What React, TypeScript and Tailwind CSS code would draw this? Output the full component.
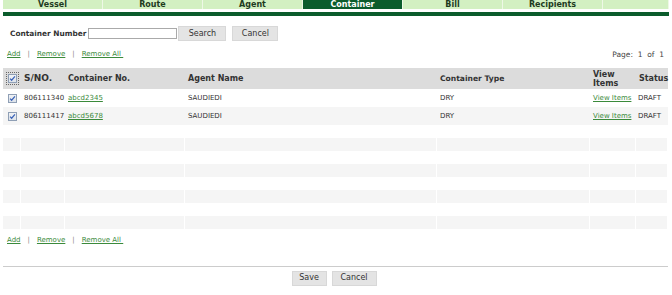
import React from "react";

const tabs = ["Vessel", "Route", "Agent", "Container", "Bill", "Recipients", ""];
const cols = "grid grid-cols-[18px_44px_120px_252px_153px_46px_32px]";

const rows = [
  { sn: "806111340", no: "abcd2345", agent: "SAUDIEDI", type: "DRY", status: "DRAFT" },
  { sn: "806111417", no: "abcd5678", agent: "SAUDIEDI", type: "DRY", status: "DRAFT" },
];

function Check({ focus }: { focus?: boolean }) {
  const box = (
    <span className="flex h-[9px] w-[9px] items-center justify-center border border-[#8f9fb5] bg-gradient-to-b from-[#f0f2f5] to-[#dde3ea]">
      <svg viewBox="0 0 8 8" className="h-[7px] w-[7px]">
        <path d="M1.2 4.2 L3 6 L6.8 1.6" fill="none" stroke="#3a62b8" strokeWidth="1.4" />
      </svg>
    </span>
  );
  if (!focus) return box;
  return <span className="flex h-[13px] w-[13px] items-center justify-center border border-dotted border-[#666]">{box}</span>;
}

function Links() {
  return (
    <div className="flex items-center text-[7px] text-[#3b8a3b]">
      <span className="underline">Add</span>
      <span className="mx-[7px] text-[#888]">|</span>
      <span className="underline">Remove</span>
      <span className="mx-[7px] text-[#888]">|</span>
      <span className="underline">Remove All&nbsp;</span>
    </div>
  );
}

function Btn({ label, w }: { label: string; w: string }) {
  return (
    <div className={`flex h-[15px] ${w} items-center justify-center border border-[#d8d8d8] bg-[#e4e4e4] text-[8px] text-[#333]`}>
      {label}
    </div>
  );
}

export default function App() {
  return (
    <div className="h-[295px] w-[672px] overflow-hidden bg-white px-[3px] font-['DejaVu_Sans',sans-serif] text-[#333]">
      {/* tab strip */}
      <div className="flex h-[9px]">
        {tabs.map((t, i) => (
          <div
            key={i}
            className={`flex items-center justify-center border-r border-[#eef8e6] text-[8px] font-bold leading-none ${
              t === "Container" ? "bg-[#0b5c2c] text-white" : "bg-[#d3f0c2] text-[#1e3b1e]"
            } ${i === 6 ? "flex-1" : "w-[100px]"}`}
          >
            {t}
          </div>
        ))}
      </div>
      <div className="mt-[3px] h-[4px] bg-[#0b5c2c]" />

      {/* search */}
      <div className="mt-[10px] flex items-center pl-[7px]">
        <span className="text-[7.4px] font-bold text-[#333]">Container Number</span>
        <div className="ml-[2px] h-[11px] w-[89px] border border-[#aaa] bg-white" />
        <div className="ml-px">
          <Btn label="Search" w="w-[48px]" />
        </div>
        <div className="ml-[6px]">
          <Btn label="Cancel" w="w-[46px]" />
        </div>
      </div>

      <div className="mt-[8px] flex items-center justify-between pl-[4px] pr-[5px]">
        <Links />
        <span className="text-[7.5px] text-[#444]">Page:&nbsp; 1&nbsp; of&nbsp; 1</span>
      </div>

      {/* table */}
      <div className="mt-[8px] w-[665px]">
        <div className={`${cols} h-[21px] items-center bg-[#dcdcdc] text-[8px] font-bold text-[#333]`}>
          <div className="flex justify-center pl-px">
            <Check focus />
          </div>
          <div className="pl-[3px] text-[9px]">S/NO.</div>
          <div className="pl-[3px]">Container No.</div>
          <div className="pl-[3px]">Agent Name</div>
          <div className="pl-[3px] text-[7.6px]">Container Type</div>
          <div className="pl-[3px] leading-[9px]">
            View
            <br />
            Items
          </div>
          <div className="pl-[3px]">Status</div>
        </div>
        {rows.map((r, i) => (
          <div key={r.sn} className={`${cols} h-[18px] items-center text-[7px] text-[#333] ${i % 2 ? "bg-[#f5f5f5]" : "bg-white"}`}>
            <div className="flex justify-center pl-px">
              <Check />
            </div>
            <div className="pl-[3px]">{r.sn}</div>
            <div className="pl-[3px] text-[#3b8a3b] underline">{r.no}</div>
            <div className="pl-[3px]">{r.agent}</div>
            <div className="pl-[3px]">{r.type}</div>
            <div className="pl-[3px] text-[#3b8a3b] underline">View Items</div>
            <div className="pl-[2px]">{r.status}</div>
          </div>
        ))}
        {Array.from({ length: 8 }).map((_, i) => (
          <div key={i} className={`${cols} h-[13px] ${i % 2 ? "bg-[#f5f5f5]" : "bg-white"}`}>
            {Array.from({ length: 7 }).map((__, j) => (
              <div key={j} className="border-r border-white" />
            ))}
          </div>
        ))}
      </div>

      <div className="mt-[6px] pl-[4px]">
        <Links />
      </div>

      <div className="mt-[20px] h-px w-[665px] bg-[#cccccc]" />
      <div className="mt-[4px] flex justify-center gap-[5px] pr-[4px]">
        <Btn label="Save" w="w-[35px]" />
        <Btn label="Cancel" w="w-[45px]" />
      </div>
    </div>
  );
}
